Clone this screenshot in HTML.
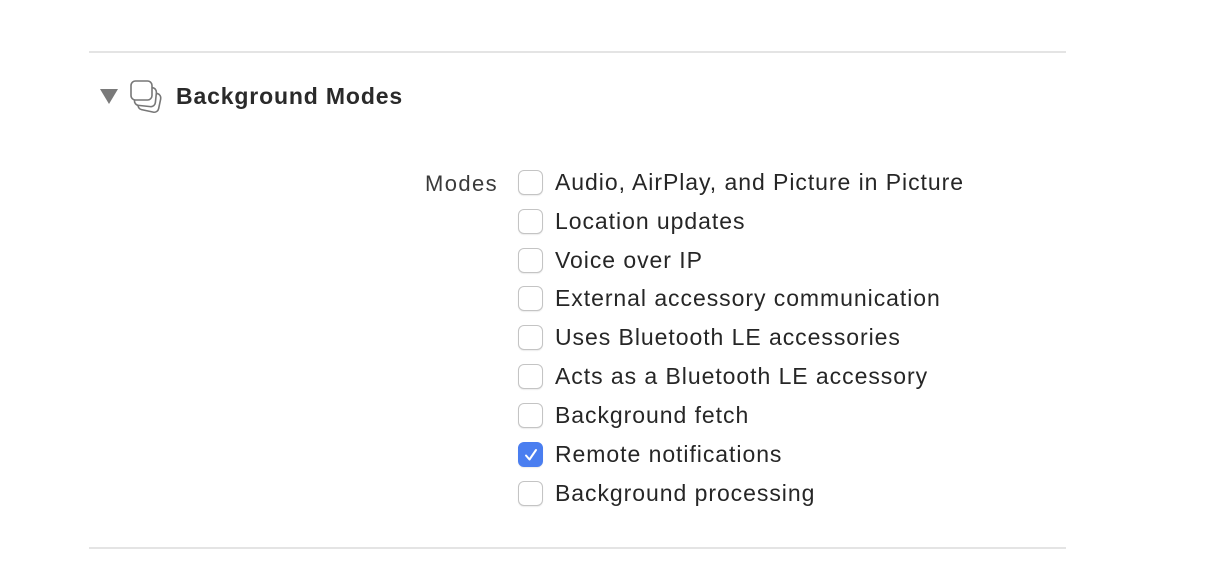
<!DOCTYPE html>
<html><head><meta charset="utf-8"><style>
body{margin:0;width:1208px;height:578px;background:#fff;font-family:"Liberation Sans",sans-serif;color:#262626;position:relative;overflow:hidden}
.line{position:absolute;left:89px;width:977px;height:2px;background:#e4e4e4}
.title{position:absolute;left:176px;top:83px;font-size:23px;font-weight:bold;color:#2a2a2a;letter-spacing:0.85px}
.tri{position:absolute;left:100px;top:89px;width:0;height:0;border-left:9px solid transparent;border-right:9px solid transparent;border-top:15px solid #7a7a7a}
.modes{position:absolute;left:425px;top:171px;font-size:22px;color:#3a3a3a;letter-spacing:1.4px}
.row{position:absolute;left:518px;height:26px;display:flex;align-items:center}
.cb{width:25px;height:25px;border:1px solid #c4c4c4;border-radius:6px;box-sizing:border-box;background:#fff;box-shadow:0 1px 1px rgba(0,0,0,0.08);position:relative}
.cb.on{background:#4a7ef0;border-color:#4a7ef0}
.lbl{margin-left:12px;font-size:23px;letter-spacing:0.95px;color:#262626;white-space:nowrap}
</style></head><body>
<div class="line" style="top:51px"></div>
<div class="line" style="top:547px"></div>
<div class="tri"></div>
<svg style="position:absolute;left:127px;top:78px" width="40" height="38" viewBox="0 0 40 38" fill="#fff" stroke="#777" stroke-width="1.6">
<rect x="12" y="14" width="21" height="19" rx="4.5" transform="rotate(12 22 23)"/>
<rect x="8" y="9" width="21" height="19" rx="4.5" transform="rotate(6 18 18)"/>
<rect x="4" y="3" width="21" height="19" rx="4.5"/>
</svg>
<div class="title">Background Modes</div>
<div class="modes">Modes</div>
<div class="row" style="top:169px"><div class="cb"></div><div class="lbl">Audio, AirPlay, and Picture in Picture</div></div>
<div class="row" style="top:208px"><div class="cb"></div><div class="lbl">Location updates</div></div>
<div class="row" style="top:247px"><div class="cb"></div><div class="lbl">Voice over IP</div></div>
<div class="row" style="top:285px"><div class="cb"></div><div class="lbl">External accessory communication</div></div>
<div class="row" style="top:324px"><div class="cb"></div><div class="lbl">Uses Bluetooth LE accessories</div></div>
<div class="row" style="top:363px"><div class="cb"></div><div class="lbl">Acts as a Bluetooth LE accessory</div></div>
<div class="row" style="top:402px"><div class="cb"></div><div class="lbl">Background fetch</div></div>
<div class="row" style="top:441px"><div class="cb on"><svg style="position:absolute;left:4px;top:4px" width="16" height="16" viewBox="0 0 16 16"><path d="M3 8.5 L6.5 12.5 L13 3" fill="none" stroke="#fff" stroke-width="2" stroke-linecap="round" stroke-linejoin="round"/></svg></div><div class="lbl">Remote notifications</div></div>
<div class="row" style="top:480px"><div class="cb"></div><div class="lbl">Background processing</div></div>
</body></html>
